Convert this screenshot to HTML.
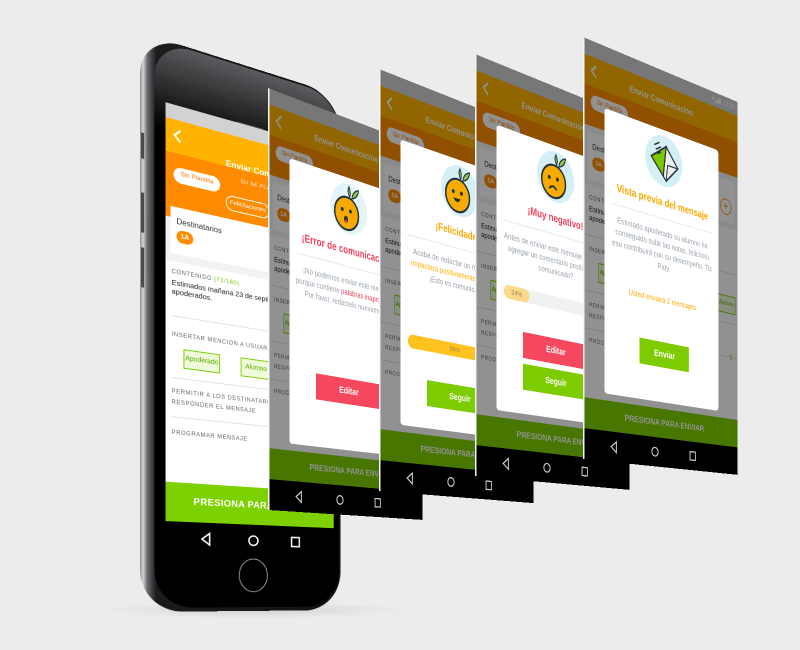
<!DOCTYPE html>
<html><head><meta charset="utf-8">
<style>
*{box-sizing:border-box}
body{margin:0;width:800px;height:650px;background:#ececec;overflow:hidden;font-family:"Liberation Sans",sans-serif}
.stg{position:absolute;left:0;top:0;width:800px;height:650px;perspective:800px;perspective-origin:400px 595px}
.rot{position:absolute;transform-origin:0 0;transform:rotateY(27.9deg)}
.a{position:absolute}
.panel{width:225px;height:422px;overflow:hidden;background:#000;border-left:2px solid #f4f4f4}
.pill{position:absolute;border-radius:9px;font-size:6.5px;text-align:center;line-height:14px}
.lbl{position:absolute;font-size:6px;letter-spacing:.6px;color:#666}
.gbtn{position:absolute;height:20px;border:1px solid #7ccc00;background:#eefad9;color:#5aa800;font-size:7px;line-height:18px;text-align:center}
.hr{position:absolute;left:0;right:0;height:1px;background:#e2e2e2}
.card{position:absolute;left:26px;top:63px;width:166px;height:290px;background:#fff;border-radius:4px}
.card .ic{position:absolute;left:56px;top:6px}
.card .tt{position:absolute;left:0;right:0;top:72px;text-align:center;font-size:11.5px;font-weight:bold;white-space:nowrap}
.card .ln{position:absolute;left:10px;right:10px;top:94px;height:1px;background:#e8e8e8}
.card .bd{position:absolute;left:8px;right:8px;top:104px;text-align:center;font-size:8.5px;line-height:12px;color:#9aa4ae}
.btn{position:absolute;left:36px;width:94px;height:27px;color:#fff;font-weight:bold;font-size:10px;text-align:center;line-height:27px}
.prog{position:absolute;left:10px;width:146px;height:14px;border-radius:7px;background:#f1f1f1;overflow:hidden}
.prog div{height:14px;border-radius:7px;font-size:7.5px;text-align:center;line-height:14px;color:#9a8040}
.dim{position:absolute;left:0;top:0;right:0;bottom:31px;background:rgba(0,0,0,.43)}
.nav{position:absolute;left:0;right:0;bottom:0;height:31px;background:#000}
</style></head><body>
<div class="a" style="left:110px;top:602px;width:290px;height:16px;border-radius:50%;background:radial-gradient(ellipse,#d2d2d2 0,#e4e4e4 50%,rgba(236,236,236,0) 75%)"></div>

<!-- PHONE -->
<div class="stg">
<div class="rot" style="left:140px;top:32px;width:218px;height:580px;border-radius:42px;background:linear-gradient(90deg,#8e8f93 0,#d4d5d7 3px,#6c6d71 7px,#3b3c3f 12px,#1b1b1c 16px,#111 100%)">
  <div class="a" style="left:1px;top:100px;width:3px;height:26px;background:#4a4b4e"></div>
  <div class="a" style="left:1px;top:160px;width:3px;height:40px;background:#4a4b4e"></div>
  <div class="a" style="left:1px;top:215px;width:3px;height:40px;background:#4a4b4e"></div>
  <div class="a" style="left:14px;top:2px;width:202px;height:574px;border-radius:38px;background:linear-gradient(180deg,#5a5b5e 0,#1c1c1d 60px,#000 90px)"></div>
  <div class="a" style="left:98px;top:62px;width:30px;height:3px;border-radius:2px;background:#555"></div>
  <div class="a" style="left:25px;top:63px;width:185px;height:425px;overflow:hidden;background:#f2f2f2">
    <div class="a" style="left:0;top:0;right:0;height:15px;background:#d2d2d2"></div>
    <div class="a" style="left:0;top:15px;right:0;height:34px;background:#ffb300">
      <svg class="a" style="left:7px;top:8px" width="10" height="16"><polyline points="8,2 2,8 8,14" fill="none" stroke="#fff" stroke-width="2"/></svg>
      <div class="a" style="left:62px;top:26px;color:#fff;font-weight:bold;font-size:9px;white-space:nowrap">Enviar Comunicación</div>
    </div>
    <div class="a" style="left:0;top:49px;right:0;height:66px;background:#ff8c00">
      <div class="pill" style="left:8px;top:14px;width:48px;height:16px;background:#fff;color:#ff7a00">Sin Plantilla</div>
      <div class="a" style="left:78px;top:10px;font-size:5.5px;color:#fff;letter-spacing:.5px;white-space:nowrap">SU SE PLANTILLA</div>
      <div class="pill" style="left:62px;top:30px;width:48px;height:16px;border:1px solid #fff;color:#fff;line-height:13px">Felicitaciones</div>
    </div>
    <div class="a" style="left:5px;top:104px;right:0;height:48px;background:#fff">
      <div class="a" style="left:6px;top:10px;font-size:8px;color:#333">Destinatarios</div>
      <div class="a" style="left:6px;top:23px;width:17px;height:13px;border-radius:7px;background:#ff8c00;color:#fff;font-size:7px;font-weight:bold;text-align:center;line-height:13px">1A</div>
    </div>
    <div class="a" style="left:0;top:160px;right:0;height:225px;background:#fff">
      <div class="lbl" style="left:6px;top:8px">CONTENIDO <span style="color:#6bbf00">(71/160)</span></div>
      <div class="a" style="left:6px;top:17px;width:180px;font-size:7.5px;line-height:9px;color:#222">Estimados mañana 23 de septiembre a las apoderados.</div>
      <div class="hr" style="top:55px;left:6px"></div>
      <div class="lbl" style="left:6px;top:72px">INSERTAR MENCION A USUARIO</div>
      <div class="gbtn" style="left:18px;top:88px;width:38px">Apoderado</div>
      <div class="gbtn" style="left:78px;top:88px;width:34px">Alumno</div>
      <div class="hr" style="top:118px;left:6px"></div>
      <div class="lbl" style="left:6px;top:128px;line-height:11px">PERMITIR A LOS DESTINATARIOS<br>RESPONDER EL MENSAJE</div>
      <div class="hr" style="top:158px;left:6px"></div>
      <div class="lbl" style="left:6px;top:172px">PROGRAMAR MENSAJE</div>
    </div>
    <div class="a" style="left:0;top:385px;right:0;height:40px;background:#7dd100;color:#fff;font-weight:bold;font-size:10px;text-align:center;line-height:40px;letter-spacing:.3px">PRESIONA PARA ENVIAR</div>
  </div>
  <svg class="a" style="left:25px;top:490px" width="185" height="30">
    <polygon points="45,9 45,21 37,15" fill="none" stroke="#fff" stroke-width="1.6"/>
    <circle cx="92" cy="15" r="5" fill="none" stroke="#fff" stroke-width="1.6"/>
    <rect x="135" y="10" width="9" height="10" fill="none" stroke="#fff" stroke-width="1.6"/>
  </svg>
  <div class="a" style="left:101px;top:524px;width:32px;height:36px;border-radius:50%;border:1px solid #9a9a9a"></div>
</div>
</div>

<!-- PANEL 1 -->
<div class="stg" style="perspective-origin:85px 595px">
<div class="rot panel" style="left:268px;top:88px">
  <div class="a" style="left:0;top:0;right:0;height:16px;background:#d2d2d2"></div>
  <div class="a" style="left:0;top:16px;right:0;height:30px;background:#ffb300"><svg class="a" style="left:7px;top:6px" width="10" height="16"><polyline points="8,2 2,8 8,14" fill="none" stroke="#fff" stroke-width="2"/></svg><div class="a" style="left:60px;top:12px;color:#fff;font-weight:bold;font-size:9px;white-space:nowrap">Enviar Comunicación</div></div>
  <div class="a" style="left:0;top:46px;right:0;height:40px;background:#ff8c00"><div class="pill" style="left:8px;top:8px;width:50px;height:15px;background:#fff;color:#ff7a00">Sin Plantilla</div></div>
  <div class="a" style="left:0;top:86px;right:0;height:274px;background:#fff">
    <div class="a" style="left:0;top:0;right:0;height:60px;background:#f2f2f2"></div>
    <div class="a" style="left:4px;top:6px;right:4px;height:48px;background:#fff"><div class="a" style="left:6px;top:10px;font-size:8px;color:#333">Destinatarios</div><div class="a" style="left:6px;top:24px;width:17px;height:13px;border-radius:7px;background:#ff8c00;color:#fff;font-size:7px;font-weight:bold;text-align:center;line-height:13px">1A</div></div>
    <div class="lbl" style="left:6px;top:70px">CONTENIDO</div>
    <div class="a" style="left:6px;top:79px;font-size:7.5px;line-height:9px;color:#222">Estimados<br>apoderados</div>
    <div class="hr" style="top:110px"></div>
    <div class="lbl" style="left:6px;top:122px">INSERTAR</div>
    <div class="gbtn" style="left:18px;top:136px;width:38px">Apoderado</div>
    <div class="hr" style="top:166px"></div>
    <div class="lbl" style="left:6px;top:176px;line-height:11px">PERMITIR<br>RESPONDER</div>
    <div class="hr" style="top:204px"></div>
    <div class="lbl" style="left:6px;top:214px">PROGRAMAR</div>
  </div>
  <div class="a" style="left:0;top:360px;right:0;height:31px;background:#7dd100;color:#fff;font-weight:bold;font-size:9.5px;text-align:center;line-height:31px">PRESIONA PARA ENVIAR</div>
  <div class="dim"></div>
  <div class="nav"><svg width="225" height="31"><polygon points="42,10 42,21 35,15.5" fill="none" stroke="#ccc" stroke-width="1.4"/><circle cx="96" cy="15.5" r="4.5" fill="none" stroke="#ccc" stroke-width="1.4"/><rect x="148" y="11" width="8" height="9" fill="none" stroke="#ccc" stroke-width="1.4"/></svg></div>
  <div class="card">
    <svg class="ic" width="54" height="54" viewBox="0 0 50 50"><circle cx="25" cy="25" r="25" fill="#e4f5f9"/><circle cx="22" cy="30" r="16" fill="#f7ab00" stroke="#23323a" stroke-width="2"/><path d="M29 14 q1-8 9-10 q-1 8-9 10z" fill="#8bc34a" stroke="#23323a" stroke-width="1.2"/><path d="M26 13 q-4-5-1-10 q3 5 1 10z" fill="#8bc34a" stroke="#23323a" stroke-width="1.2"/><circle cx="16" cy="27" r="2" fill="#23323a"/><circle cx="27" cy="27" r="2" fill="#23323a"/><ellipse cx="21" cy="36" rx="2.6" ry="3.6" fill="#23323a"/><ellipse cx="21" cy="38" rx="1.6" ry="1.5" fill="#f2405b"/></svg>
    <div class="tt" style="color:#f2405b">¡Error de comunicación!</div>
    <div class="ln"></div>
    <div class="bd">¡No podemos enviar este mensaje porque contiene <span style="color:#f2405b">palabras inapropiadas!</span> Por favor, redáctelo nuevamente.</div>
    <div class="btn" style="top:214px;background:#f5475e">Editar</div>
  </div>
</div>
</div>

<!-- PANEL 2 -->
<div class="stg" style="perspective-origin:196px 595px">
<div class="rot panel" style="left:379px;top:69px">
  <div class="a" style="left:0;top:0;right:0;height:16px;background:#d2d2d2"></div>
  <div class="a" style="left:0;top:16px;right:0;height:30px;background:#ffb300"><svg class="a" style="left:7px;top:6px" width="10" height="16"><polyline points="8,2 2,8 8,14" fill="none" stroke="#fff" stroke-width="2"/></svg><div class="a" style="left:60px;top:12px;color:#fff;font-weight:bold;font-size:9px;white-space:nowrap">Enviar Comunicación</div></div>
  <div class="a" style="left:0;top:46px;right:0;height:40px;background:#ff8c00"><div class="pill" style="left:8px;top:8px;width:50px;height:15px;background:#fff;color:#ff7a00">Sin Plantilla</div></div>
  <div class="a" style="left:0;top:86px;right:0;height:274px;background:#fff">
    <div class="a" style="left:0;top:0;right:0;height:60px;background:#f2f2f2"></div>
    <div class="a" style="left:4px;top:6px;right:4px;height:48px;background:#fff"><div class="a" style="left:6px;top:10px;font-size:8px;color:#333">Destinatarios</div><div class="a" style="left:6px;top:24px;width:17px;height:13px;border-radius:7px;background:#ff8c00;color:#fff;font-size:7px;font-weight:bold;text-align:center;line-height:13px">1A</div></div>
    <div class="lbl" style="left:6px;top:70px">CONTENIDO</div>
    <div class="a" style="left:6px;top:79px;font-size:7.5px;line-height:9px;color:#222">Estimados<br>apoderados</div>
    <div class="hr" style="top:110px"></div>
    <div class="lbl" style="left:6px;top:122px">INSERTAR</div>
    <div class="gbtn" style="left:18px;top:136px;width:38px">Apoderado</div>
    <div class="hr" style="top:166px"></div>
    <div class="lbl" style="left:6px;top:176px;line-height:11px">PERMITIR<br>RESPONDER</div>
    <div class="hr" style="top:204px"></div>
    <div class="lbl" style="left:6px;top:214px">PROGRAMAR</div>
  </div>
  <div class="a" style="left:0;top:360px;right:0;height:31px;background:#7dd100;color:#fff;font-weight:bold;font-size:9.5px;text-align:center;line-height:31px">PRESIONA PARA ENVIAR</div>
  <div class="dim"></div>
  <div class="nav"><svg width="225" height="31"><polygon points="42,10 42,21 35,15.5" fill="none" stroke="#ccc" stroke-width="1.4"/><circle cx="96" cy="15.5" r="4.5" fill="none" stroke="#ccc" stroke-width="1.4"/><rect x="148" y="11" width="8" height="9" fill="none" stroke="#ccc" stroke-width="1.4"/></svg></div>
  <div class="card">
    <svg class="ic" width="54" height="54" viewBox="0 0 50 50"><circle cx="25" cy="25" r="25" fill="#d4f0f6"/><circle cx="22" cy="30" r="16" fill="#f7ab00" stroke="#23323a" stroke-width="2"/><path d="M29 14 q1-8 9-10 q-1 8-9 10z" fill="#8bc34a" stroke="#23323a" stroke-width="1.2"/><path d="M26 13 q-4-5-1-10 q3 5 1 10z" fill="#8bc34a" stroke="#23323a" stroke-width="1.2"/><circle cx="16" cy="27" r="2" fill="#23323a"/><circle cx="27" cy="27" r="2" fill="#23323a"/><path d="M16 33 q5 7 10 0z" fill="#23323a"/></svg>
    <div class="tt" style="color:#ffa800">¡Felicidades!</div>
    <div class="ln"></div>
    <div class="bd">Acaba de redactar un mensaje que <span style="color:#ffb300">impactará positivamente</span> a la familia. ¡Esto es comunicación!</div>
    <div class="prog" style="top:196px"><div style="width:90%;background:#ffc21f">90%</div></div>
    <div class="btn" style="top:240px;background:#7ccc00">Seguir</div>
  </div>
</div>
</div>

<!-- PANEL 3 -->
<div class="stg" style="perspective-origin:292px 595px">
<div class="rot panel" style="left:475px;top:54px">
  <div class="a" style="left:0;top:0;right:0;height:16px;background:#d2d2d2"></div>
  <div class="a" style="left:0;top:16px;right:0;height:30px;background:#ffb300"><svg class="a" style="left:7px;top:6px" width="10" height="16"><polyline points="8,2 2,8 8,14" fill="none" stroke="#fff" stroke-width="2"/></svg><div class="a" style="left:60px;top:12px;color:#fff;font-weight:bold;font-size:9px;white-space:nowrap">Enviar Comunicación</div></div>
  <div class="a" style="left:0;top:46px;right:0;height:40px;background:#ff8c00"><div class="pill" style="left:8px;top:8px;width:50px;height:15px;background:#fff;color:#ff7a00">Sin Plantilla</div></div>
  <div class="a" style="left:0;top:86px;right:0;height:274px;background:#fff">
    <div class="a" style="left:0;top:0;right:0;height:60px;background:#f2f2f2"></div>
    <div class="a" style="left:4px;top:6px;right:4px;height:48px;background:#fff"><div class="a" style="left:6px;top:10px;font-size:8px;color:#333">Destinatarios</div><div class="a" style="left:6px;top:24px;width:17px;height:13px;border-radius:7px;background:#ff8c00;color:#fff;font-size:7px;font-weight:bold;text-align:center;line-height:13px">1A</div></div>
    <div class="lbl" style="left:6px;top:70px">CONTENIDO</div>
    <div class="a" style="left:6px;top:79px;font-size:7.5px;line-height:9px;color:#222">Estimados<br>apoderados</div>
    <div class="hr" style="top:110px"></div>
    <div class="lbl" style="left:6px;top:122px">INSERTAR</div>
    <div class="gbtn" style="left:18px;top:136px;width:38px">Apoderado</div>
    <div class="hr" style="top:166px"></div>
    <div class="lbl" style="left:6px;top:176px;line-height:11px">PERMITIR<br>RESPONDER</div>
    <div class="hr" style="top:204px"></div>
    <div class="lbl" style="left:6px;top:214px">PROGRAMAR</div>
  </div>
  <div class="a" style="left:0;top:360px;right:0;height:31px;background:#7dd100;color:#fff;font-weight:bold;font-size:9.5px;text-align:center;line-height:31px">PRESIONA PARA ENVIAR</div>
  <div class="dim"></div>
  <div class="nav"><svg width="225" height="31"><polygon points="42,10 42,21 35,15.5" fill="none" stroke="#ccc" stroke-width="1.4"/><circle cx="96" cy="15.5" r="4.5" fill="none" stroke="#ccc" stroke-width="1.4"/><rect x="148" y="11" width="8" height="9" fill="none" stroke="#ccc" stroke-width="1.4"/></svg></div>
  <div class="card">
    <svg class="ic" width="54" height="54" viewBox="0 0 50 50"><circle cx="25" cy="25" r="25" fill="#d4f0f6"/><circle cx="22" cy="30" r="16" fill="#f7ab00" stroke="#23323a" stroke-width="2"/><path d="M29 14 q1-8 9-10 q-1 8-9 10z" fill="#8bc34a" stroke="#23323a" stroke-width="1.2"/><path d="M26 13 q-4-5-1-10 q3 5 1 10z" fill="#8bc34a" stroke="#23323a" stroke-width="1.2"/><circle cx="16" cy="27" r="2" fill="#23323a"/><circle cx="27" cy="27" r="2" fill="#23323a"/><path d="M16 38 q5 -6 10 0" fill="none" stroke="#23323a" stroke-width="2"/></svg>
    <div class="tt" style="color:#f2405b">¡Muy negativo!</div>
    <div class="ln"></div>
    <div class="bd">Antes de enviar este mensaje, ¿podría agregar un comentario positivo a su comunicado?</div>
    <div class="prog" style="top:160px"><div style="width:24%;background:#fbd98a">24%</div></div>
    <div class="btn" style="top:205px;background:#f5475e">Editar</div>
    <div class="btn" style="top:238px;background:#7ccc00">Seguir</div>
  </div>
</div>
</div>

<!-- PANEL 4 -->
<div class="stg" style="perspective-origin:400px 595px">
<div class="rot panel" style="left:583px;top:37px">
  <div class="a" style="left:0;top:0;right:0;height:16px;background:#d2d2d2"><div class="a" style="right:4px;top:3px;font-size:8px;color:#fff">▾◢▮ 12:30</div></div>
  <div class="a" style="left:0;top:16px;right:0;height:30px;background:#ffb300"><svg class="a" style="left:7px;top:6px" width="10" height="16"><polyline points="8,2 2,8 8,14" fill="none" stroke="#fff" stroke-width="2"/></svg><div class="a" style="left:60px;top:12px;color:#fff;font-weight:bold;font-size:9px;white-space:nowrap">Enviar Comunicación</div></div>
  <div class="a" style="left:0;top:46px;right:0;height:40px;background:#ff8c00"><div class="pill" style="left:8px;top:8px;width:50px;height:15px;background:#fff;color:#ff7a00">Sin Plantilla</div></div>
  <div class="a" style="left:0;top:86px;right:0;height:274px;background:#fff">
    <div class="a" style="left:0;top:0;right:0;height:60px;background:#f2f2f2"></div>
    <div class="a" style="left:4px;top:6px;right:4px;height:48px;background:#fff"><div class="a" style="left:6px;top:10px;font-size:8px;color:#333">Destinatarios</div><div class="a" style="left:6px;top:24px;width:17px;height:13px;border-radius:7px;background:#ff8c00;color:#fff;font-size:7px;font-weight:bold;text-align:center;line-height:13px">1A</div><div class="a" style="right:6px;top:22px;width:18px;height:18px;border-radius:50%;border:1.5px solid #ff8c00;color:#ff8c00;font-size:14px;line-height:15px;text-align:center">+</div></div>
    <div class="lbl" style="left:6px;top:70px">CONTENIDO</div>
    <div class="a" style="left:6px;top:79px;font-size:7.5px;line-height:9px;color:#222">Estimados<br>apoderados</div>
    <div class="hr" style="top:110px"></div>
    <div class="lbl" style="left:6px;top:122px">INSERTAR</div>
    <div class="gbtn" style="left:18px;top:136px;width:38px">Apoderado</div>
    <div class="gbtn" style="left:190px;top:136px;width:30px">Alumno</div>
    <div class="hr" style="top:166px"></div>
    <div class="lbl" style="left:6px;top:176px;line-height:11px">PERMITIR<br>RESPONDER</div>
    <div class="a" style="right:8px;top:196px;color:#7ccc00;font-size:16px">›</div>
    <div class="hr" style="top:204px"></div>
    <div class="lbl" style="left:6px;top:214px">PROGRAMAR</div>
  </div>
  <div class="a" style="left:0;top:360px;right:0;height:31px;background:#7dd100;color:#fff;font-weight:bold;font-size:9.5px;text-align:center;line-height:31px">PRESIONA PARA ENVIAR</div>
  <div class="dim"></div>
  <div class="nav"><svg width="225" height="31"><polygon points="42,10 42,21 35,15.5" fill="none" stroke="#ccc" stroke-width="1.4"/><circle cx="96" cy="15.5" r="4.5" fill="none" stroke="#ccc" stroke-width="1.4"/><rect x="148" y="11" width="8" height="9" fill="none" stroke="#ccc" stroke-width="1.4"/></svg></div>
  <div class="card">
    <svg class="ic" width="54" height="54" viewBox="0 0 50 50"><circle cx="25" cy="25" r="25" fill="#d4f0f6"/><path d="M8 24 L28 10 L44 28 L28 44 Z" fill="#eceeee" stroke="#263238" stroke-width="1.6"/><path d="M28 44 L30 28 L44 28" fill="none" stroke="#263238" stroke-width="1.2"/><path d="M8 24 L28 10 L24 40 Z" fill="#7cc800" stroke="#263238" stroke-width="1.6"/><path d="M12 12 l7-4 M14 16 l7-4 M16 20 l5-3" stroke="#263238" stroke-width="1.4"/></svg>
    <div class="tt" style="color:#ffa800">Vista previa del mensaje</div>
    <div class="ln"></div>
    <div class="bd">Estimado apoderado su alumno ha conseguido subir las notas, felicítelo eso contribuirá con su desempeño. Tis Paty.</div>
    <div class="a" style="left:0;right:0;top:176px;text-align:center;font-size:8.5px;color:#ffa800">Usted enviará 2 mensajes.</div>
    <div class="btn" style="top:226px;left:48px;width:72px;background:#7ccc00">Enviar</div>
  </div>
</div>
</div>

</body></html>
